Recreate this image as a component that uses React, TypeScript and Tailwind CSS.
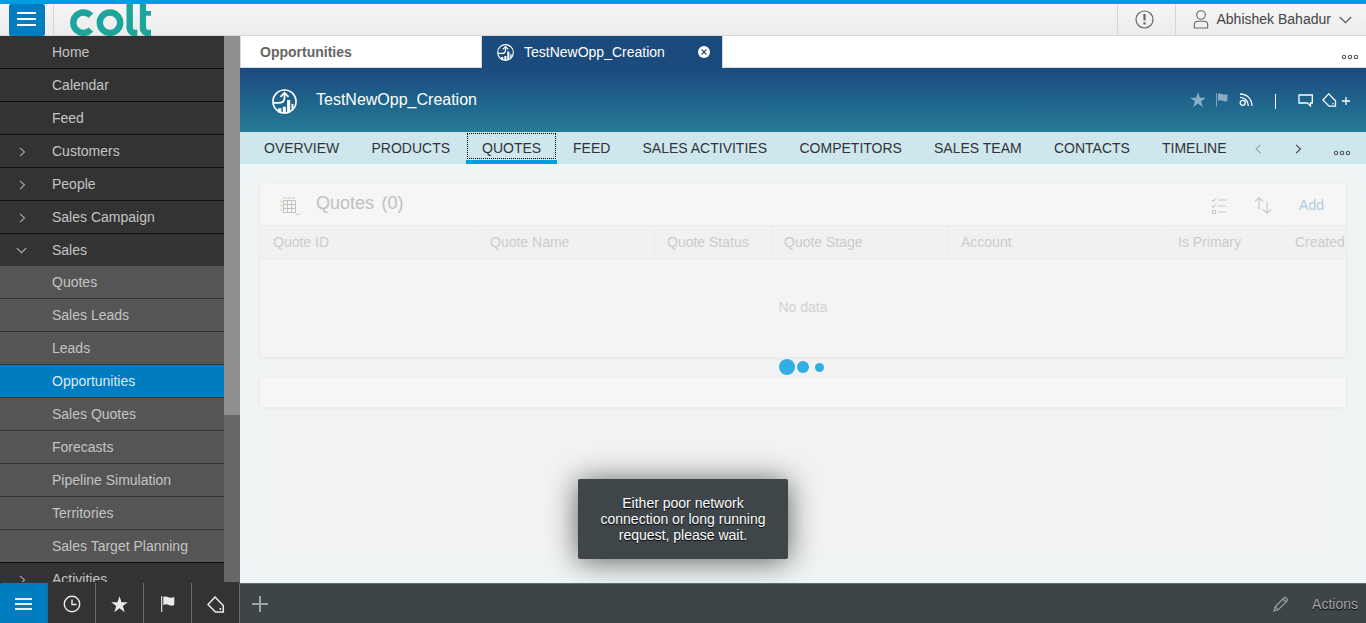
import React from "react";

type IconProps = { className?: string };

const Chevron = ({ d, className, w = 8, h = 10 }: { d: string; className?: string; w?: number; h?: number }) => (
  <svg className={className} width={w} height={h} viewBox={`0 0 ${w} ${h}`} fill="none" stroke="currentColor" strokeWidth="1.1">
    <path d={d} />
  </svg>
);

const Bars = ({ className }: IconProps) => (
  <svg className={className} width="19" height="14" viewBox="0 0 19 14" fill="currentColor">
    <rect width="19" height="2" />
    <rect y="6" width="19" height="2" />
    <rect y="12" width="19" height="2" />
  </svg>
);

const OppIcon = ({ className }: IconProps) => (
  <svg className={className} viewBox="0 0 26 26" fill="none" stroke="white">
    <circle cx="13" cy="13" r="12" strokeWidth="1.700" />
    <path d="M1.500 14.500h5c4.500 0 6.500-1.800 6.500-5.500V4.500" strokeWidth="1.900" />
    <path d="M8.800 8.300 13 4l4.200 4.300" strokeWidth="1.900" />
    <path d="M8 20v4.500M12.800 18.500v6.500M17.300 11.500v13" strokeWidth="3.200" />
    <path d="M21.300 15.500v6" strokeWidth="2" />
  </svg>
);

const Star = ({ className }: IconProps) => (
  <svg className={className} viewBox="0 0 16 16" fill="currentColor">
    <path d="M8 .3 9.900 5.800H15.800L11.100 9.300 12.900 15.200 8 11.600 3.100 15.200 4.900 9.300.2 5.800H6.100z" />
  </svg>
);

const Flag = ({ className }: IconProps) => (
  <svg className={className} viewBox="0 0 14 16" fill="currentColor">
    <path d="M0 0h1.300v16H0z" opacity=".85" />
    <path d="M2.300 1c2-.9 3.500-.5 5 .2s3.200.6 6 0V9c-2 .9-3.800.8-5.500 0s-3.500-.9-5.500 0z" />
  </svg>
);

const Tag = ({ className }: IconProps) => (
  <svg className={className} viewBox="0 0 18 17" fill="none" stroke="currentColor" strokeWidth="1.500">
    <path d="M8 1 1 8.500 8.500 16H16.300V9.500z" />
    <circle cx="13.300" cy="13" r="1" fill="currentColor" stroke="none" />
  </svg>
);

const More = ({ className }: IconProps) => (
  <svg className={className} width="18" height="6" viewBox="0 0 18 6" fill="none" stroke="currentColor" strokeWidth="1.100">
    <circle cx="3" cy="3" r="1.700" />
    <circle cx="9" cy="3" r="1.700" />
    <circle cx="15" cy="3" r="1.700" />
  </svg>
);

const Logo = () => (
  <svg className="ml-[16px] h-8 w-[82px]" viewBox="0 0 82 32" fill="none" stroke="#1ba59b" strokeWidth="6.400">
    <circle cx="13.500" cy="18.700" r="10.200" pathLength="360" strokeDasharray="274 86" transform="rotate(43 13.500 18.700)" />
    <circle cx="40" cy="18.700" r="10.200" />
    <svg x="56" y="0" width="11.300" height="32">
      <rect x="3.700" y="-20" width="30" height="49" rx="5" />
    </svg>
    <svg x="69.500" y="0" width="11.500" height="32">
      <rect x="3.400" y="-20" width="30" height="49" rx="5" />
      <line x1="3" y1="9.400" x2="12" y2="9.400" strokeWidth="4.600" />
    </svg>
  </svg>
);

type NavItem = { label: string; expand?: "right" | "down"; active?: boolean };

const topNav: NavItem[] = [
  { label: "Home" },
  { label: "Calendar" },
  { label: "Feed" },
  { label: "Customers", expand: "right" },
  { label: "People", expand: "right" },
  { label: "Sales Campaign", expand: "right" },
];
const subNav: NavItem[] = [
  { label: "Quotes" },
  { label: "Sales Leads" },
  { label: "Leads" },
  { label: "Opportunities", active: true },
  { label: "Sales Quotes" },
  { label: "Forecasts" },
  { label: "Pipeline Simulation" },
  { label: "Territories" },
];

const NavRow = ({ item, tone }: { item: NavItem; tone: string }) => (
  <div className={`flex shrink-0 items-center ${tone}`}>
    <span className="flex w-[52px] items-center pl-[16px] text-[#aaa]">
      {item.expand === "right" && <Chevron className="ml-[3px] mt-px" d="M1 .8 5.500 5 1 9.200" />}
      {item.expand === "down" && <Chevron w={11} h={7} d="M.8 1 5.500 5.700 10.200 1" />}
    </span>
    <span>{item.label}</span>
  </div>
);

const Sidebar = () => (
  <aside className="flex h-[547px] w-60 shrink-0 overflow-hidden border-b border-[#333] text-sm text-[#c4c4c4]">
    <nav className="flex w-56 flex-col overflow-hidden">
      {topNav.map((n) => (
        <NavRow key={n.label} item={n} tone="h-[33px] bg-[#333] border-b border-[#0d0d0d]" />
      ))}
      <NavRow item={{ label: "Sales", expand: "down" }} tone="h-8 bg-[#333]" />
      {subNav.map((n) => (
        <NavRow
          key={n.label}
          item={n}
          tone={n.active ? "h-[33px] bg-[#007cc0] text-[#dfe9ef] border-b border-[#333]" : "h-[33px] bg-[#555] border-b border-[#333]"}
        />
      ))}
      <NavRow item={{ label: "Sales Target Planning" }} tone="h-[33px] bg-[#555] border-b border-[#0d0d0d]" />
      <NavRow item={{ label: "Activities", expand: "right" }} tone="h-8 bg-[#333]" />
    </nav>
    <div className="w-4 bg-[#676767]">
      <div className="h-[379px] bg-[#8f8f8f]" />
    </div>
  </aside>
);

const TopBar = () => (
  <header className="flex h-9 shrink-0 border-b border-t-4 border-b-[#d9d9d9] border-t-[#009de0] bg-linear-to-b from-[#f6f6f6] to-[#ececec]">
    <div className="ml-[9px] flex h-8 w-9 rounded-[2px] bg-[#007cc0] pl-2 pt-2 text-white">
      <Bars />
    </div>
    <div className="ml-2 w-px bg-[#d5d5d5]" />
    <Logo />
    <div className="ml-auto flex w-[58px] items-center justify-center border-l border-[#d5d5d5]">
      <svg className="-ml-[5px] -mt-px" width="19" height="19" viewBox="0 0 19 19" fill="none" stroke="#666">
        <circle cx="9.500" cy="9.500" r="8.500" strokeWidth="1.200" />
        <path d="M9.500 4v6.500M9.500 12.300v2.200" strokeWidth="2.200" />
      </svg>
    </div>
    <div className="flex w-[191px] items-center border-l border-[#d5d5d5] pl-[17px] text-[14px] text-[#444]">
      <svg className="-mt-px" width="16" height="19" viewBox="0 0 16 19" fill="none" stroke="#666" strokeWidth="1.100">
        <circle cx="8" cy="5" r="4.300" />
        <path d="M1.300 18v-3c0-2.600 1.500-3.700 3.700-3.700h6c2.200 0 3.700 1.100 3.700 3.700v3z" />
      </svg>
      <span className="ml-[7.500px] whitespace-nowrap">Abhishek Bahadur</span>
      <Chevron className="ml-[8.500px] text-[#555]" w={13} h={8} d="M.8 1 6.500 6.700 12.200 1" />
    </div>
  </header>
);

const TabBar = () => (
  <div className="flex h-8 bg-white text-sm">
    <div className="w-[242px] border-x border-b border-[#d9d9d9] pl-[19px] font-bold leading-8 text-[#666]">Opportunities</div>
    <div className="flex w-60 items-center bg-[#1b4a7c] pl-[15px] text-white">
      <OppIcon className="h-[17px] w-[17px]" />
      <span className="ml-[10px]">TestNewOpp_Creation</span>
      <svg className="ml-auto mr-3" width="12" height="12" viewBox="0 0 12 12">
        <circle cx="6" cy="6" r="6" fill="white" />
        <path d="M3.600 3.600l4.800 4.800M8.400 3.600 3.600 8.400" stroke="#1b4a7c" strokeWidth="1.300" />
      </svg>
    </div>
    <div className="flex flex-1 justify-end border-b border-l border-[#d9d9d9] pr-[7px] text-[#555]">
      <More className="mt-[18px]" />
    </div>
  </div>
);

const TitleBar = () => (
  <div className="flex h-16 items-center bg-linear-to-b from-[#1b4a7e] to-[#247b97] pl-8 pr-[16px] text-white">
    <OppIcon className="mt-[3px] h-[25px] w-[25px]" />
    <span className="ml-[19px] text-[16px]">TestNewOpp_Creation</span>
    <div className="ml-auto flex items-center">
      <Star className="h-4 w-4 text-[#8aadc6]" />
      <Flag className="ml-[10px] h-[14px] w-3 text-[#8aadc6]" />
      <svg className="ml-[11px]" width="14" height="14" viewBox="0 0 14 14" fill="none" stroke="white" strokeWidth="1.300">
        <circle cx="3.700" cy="9.800" r="2.500" />
        <path d="M1 4.400c4.600 0 8.300 3.500 8.300 8.600M1 1c7 0 12 5 12 12" />
      </svg>
      <div className="ml-[22px] mt-[3px] h-[15px] w-[1.500px] bg-white" />
      <svg className="ml-[22px]" width="15" height="13" viewBox="0 0 15 13" fill="none" stroke="white" strokeWidth="1.300">
        <path d="M1 1h13.300v8H12.500v2.800L9.500 9H1z" />
      </svg>
      <Tag className="ml-[9px] h-[14px] w-[15px]" />
      <svg className="ml-[5px] mt-[2px]" width="8" height="8" viewBox="0 0 8 8" stroke="white" strokeWidth="1.300">
        <path d="M0 4h8M4 0v8" />
      </svg>
    </div>
  </div>
);

const Facets = () => (
  <div className="flex h-8 bg-[#cde7ed] pl-2 text-sm leading-8 text-[#333]">
    <span className="w-[107px] pl-4">OVERVIEW</span>
    <span className="w-[111px] pl-[16.500px]">PRODUCTS</span>
    <span className="relative h-8 w-[91px] border-b-[4px] border-[#009de0] pl-4">
      QUOTES
      <span className="absolute left-px top-px h-[26px] w-[89px] border border-dotted border-black" />
    </span>
    <span className="w-[69px] pl-4">FEED</span>
    <span className="w-[157px] pl-[16.500px]">SALES ACTIVITIES</span>
    <span className="w-[135px] pl-[16.500px]">COMPETITORS</span>
    <span className="w-[120px] pl-4">SALES TEAM</span>
    <span className="w-[108px] pl-4">CONTACTS</span>
    <span className="w-[108px] pl-4">TIMELINE</span>
    <Chevron className="mt-3 text-[#8ba3a9]" d="M6.500.8 2 5 6.500 9.200" />
    <Chevron className="ml-[33px] mt-3 text-[#444]" d="M1 .8 5.500 5 1 9.200" />
    <More className="ml-auto mr-[15px] mt-[18px] text-[#555]" />
  </div>
);

const columns = [
  { label: "Quote ID", cls: "w-[218px]" },
  { label: "Quote Name", cls: "w-[177px]" },
  { label: "Quote Status", cls: "w-[117px]" },
  { label: "Quote Stage", cls: "w-[177px]" },
  { label: "Account", cls: "w-[217px]" },
  { label: "Is Primary", cls: "w-[117px]" },
  { label: "Created", cls: "w-[63px]" },
];

const QuotesCard = () => (
  <section className="h-[173px] overflow-hidden bg-[#f4f4f4] shadow-[0_1px_4px_rgba(0,0,0,0.05)]">
    <div className="flex h-[41px] items-center bg-[#f6f6f6] pl-5 pr-[22px]">
      <svg className="mt-[3px]" width="21" height="19" viewBox="0 0 21 19" fill="none" stroke="#c4c1be" strokeWidth="1">
        <path d="M3.500 3.500h12v12h-12zM3.500 7.500h12M3.500 11.500h12M7.500 3.500v12M11.500 3.500v12" />
        <path d="M3 1h3.500M7.500 1h3.500M12 1h3" />
        <path d="M.5 4.500h2M.5 8.500h2M.5 12.500h2" stroke="#e5d3bd" strokeWidth="2" />
        <path d="m15.500 16.500 2 1.500 2-1.500" />
      </svg>
      <span className="-mt-[3px] ml-[15px] text-[18px] text-[#c0c0c0]">Quotes</span>
      <span className="-mt-[3px] ml-[7.500px] text-[18px] text-[#c0c0c0]">(0)</span>
      <svg className="ml-auto mt-px" width="16" height="17" viewBox="0 0 16 17" fill="none" stroke="#c9c9c9" strokeWidth="1.100">
        <path d="M7 3h8.500M7 9h8.500M7 15h8.500M1 3l1.300 1.300L5.300 1M1 9l1.300 1.300L5.300 7M1.500 13.500h3v3h-3z" />
      </svg>
      <svg className="ml-[27px] mt-px" width="18" height="17" viewBox="0 0 18 17" fill="none" stroke="#c9c9c9" strokeWidth="1.200">
        <path d="M5 12.500V1M1 4.500 5 .8l4 3.700M13 4.500V16M9 12.500l4 3.700 4-3.700" />
      </svg>
      <span className="ml-[27px] mt-[1px] text-sm text-[#b0cbdd]">Add</span>
    </div>
    <div className="flex h-[34px] border-y border-[#ececec] bg-[#f1f1f1] text-sm leading-8 text-[#cbcbcb]">
      {columns.map((c) => (
        <div key={c.label} className={`shrink-0 whitespace-nowrap border-r border-[#ebebeb] pl-3 first:pl-[13px] last:border-r-0 ${c.cls}`}>
          {c.label}
        </div>
      ))}
    </div>
    <div className="flex h-[95px] items-center justify-center text-sm text-[#d2d2d2]">No data</div>
  </section>
);

const footerIcons = [
  <svg key="clock" width="18" height="18" viewBox="0 0 18 18" fill="none" stroke="currentColor" strokeWidth="1.400">
    <circle cx="9" cy="9" r="7.700" />
    <path d="M9 4.500V9.500h4.500" />
  </svg>,
  <Star key="star" className="h-[17px] w-[17px]" />,
  <Flag key="flag" className="h-4 w-[14px]" />,
  <Tag key="tag" className="h-[17px] w-[18px]" />,
];

const Footer = () => (
  <footer className="flex h-10 shrink-0 bg-[#3e4549] text-sm text-[#a3a7a9]">
    <div className="flex w-60 shrink-0 bg-[#333] text-[#ebebeb]">
      <div className="flex w-12 shrink-0 items-center justify-center rounded-tl-[2px] border-r border-[#1d6b96] bg-[#007cc0] pt-[2px]">
        <svg width="17" height="12" viewBox="0 0 17 12" fill="currentColor">
          <rect width="17" height="2" />
          <rect y="5" width="17" height="2" />
          <rect y="10" width="17" height="2" />
        </svg>
      </div>
      {footerIcons.map((icon, i) => (
        <div key={i} className="flex w-12 shrink-0 items-center justify-center border-r border-[#6b6b6b] bg-[#333] pt-[2px]">
          {icon}
        </div>
      ))}
    </div>
    <div className="flex flex-1 items-center border-t border-[#5f7077] pl-[12px] pr-2">
      <svg className="mt-px" width="16" height="16" viewBox="0 0 16 16" stroke="#a0a3a5" strokeWidth="2">
        <path d="M0 8h16M8 0v16" />
      </svg>
      <svg className="ml-auto mt-px" width="16" height="16" viewBox="0 0 16 16" fill="none" stroke="#a0a3a5" strokeWidth="1.200">
        <path d="M1 15 2.200 10.800 11.300 1.700a1 1 0 0 1 1.400 0L14.300 3.300a1 1 0 0 1 0 1.400L5.200 13.800zM10 3l3 3M2.200 10.800 5.200 13.800" />
      </svg>
      <span className="ml-[23px] mt-px [text-shadow:0_1px_1px_#000]">Actions</span>
    </div>
  </footer>
);

export default function App() {
  return (
    <div className="flex h-[623px] w-[1366px] flex-col overflow-hidden font-['Liberation_Sans',Arial,sans-serif]">
      <TopBar />
      <div className="flex h-[547px]">
        <Sidebar />
        <main className="relative flex flex-1 flex-col">
          <TabBar />
          <TitleBar />
          <Facets />
          <div className="flex flex-1 flex-col gap-[21px] bg-[#f1f3f3] px-5 pt-5 shadow-[inset_0_0_28px_4px_#edf6f7]">
            <QuotesCard />
            <section className="h-[29px] bg-[#f6f6f6] shadow-[0_1px_4px_rgba(0,0,0,0.05)]" />
          </div>
          <div className="absolute left-[539px] top-[323px] flex h-4 items-center">
            <span className="h-4 w-4 rounded-full bg-[#33aee5]" />
            <span className="ml-[2px] h-3 w-3 rounded-full bg-[#33aee5]" />
            <span className="ml-[5.500px] h-[9px] w-[9px] rounded-full bg-[#33aee5]" />
          </div>
          <div className="absolute left-[338px] top-[443px] flex h-20 w-[210px] items-center justify-center rounded-[2px] bg-[#3e464a] text-center text-sm leading-4 text-white shadow-[0_2px_30px_rgba(0,0,0,0.62)] [text-shadow:0_1px_1px_#000]">
            <p>
              Either poor network
              <br />
              connection or long running
              <br />
              request, please wait.
            </p>
          </div>
        </main>
      </div>
      <Footer />
    </div>
  );
}
